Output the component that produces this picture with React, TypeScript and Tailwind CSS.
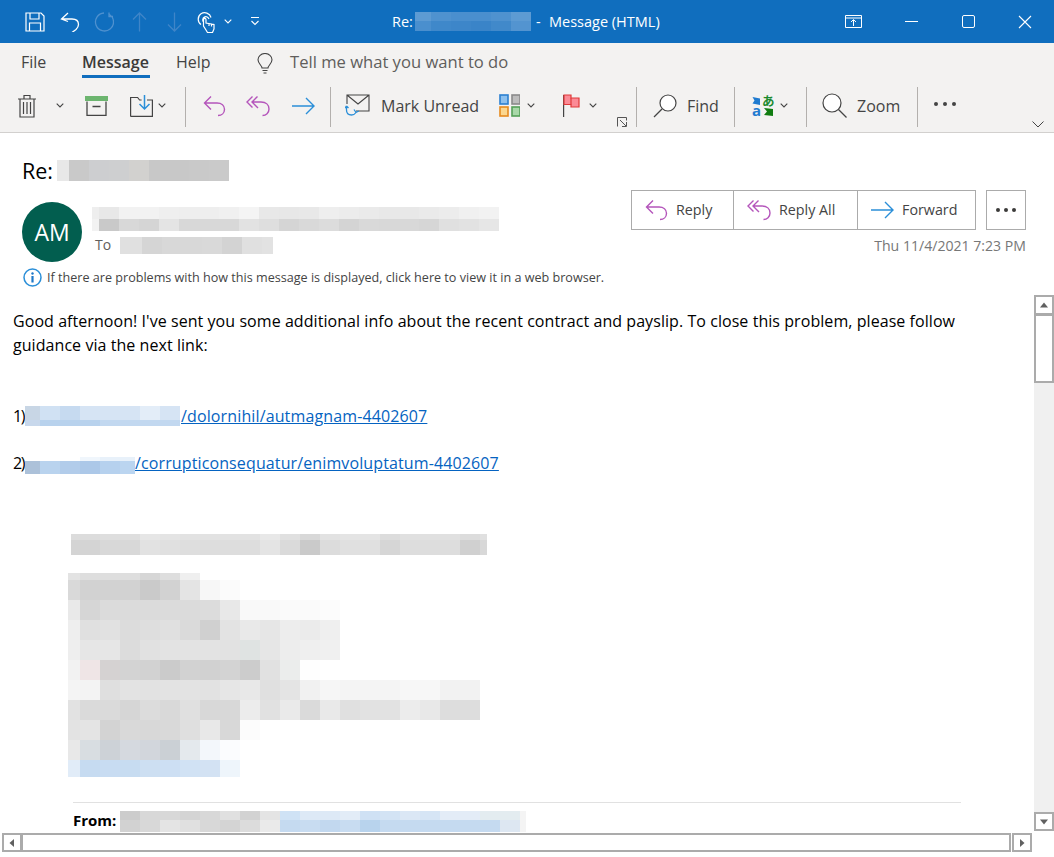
import type { ReactNode } from "react"

// pixelated (redacted) blocks: every row is a list of cell colours
function Mosaic({ rows, first, cell = 20, h }: { rows: string[][]; first: number; cell?: number; h: number[] }) {
  return (
    <div className="flex flex-col shrink-0">
      {rows.map((row, i) => (
        <div key={i} className="flex" style={{ height: h[i] }}>
          {row.map((c, j) => (
            <div key={j} className="shrink-0" style={{ background: "#" + c, width: j === 0 ? first : cell }} />
          ))}
        </div>
      ))}
    </div>
  )
}

const g = (s: string) => s.split(" ").map((v) => (v.length === 2 ? v + v + v : v))

const TITLE = [g("5d9bd3 4f92cf 4a8fce 4a8fce 4f92cf 5d9bd3"), g("4a8fce 3f88ca 3d86c9 3a84c8 4189ca 5394d0")]
const SUBJECT = [g("e8 c9 cdced0 cecfd0 d2d1cf c8 c8 c9 ca")]
const SENDER = [
  g("ee e8 f2 f2 ef ee ee f0 f4 e8 e7 e8 ee ec ea e8 e8 ea ec f0 f2"),
  g("f2 c9 d8 d5 e4 d8 d8 d8 e2 de d5 d9 dc d4 d9 d8 d8 d6 e0 e2 e6"),
]
const TO = [g("e0 d5 d8 d8 d9 d3 e0 e2")]
const LINK1 = [
  g("c8d6e5 d0e1f3 c6daf0 d6e4f4 d6e4f4 d6e4f4 e3edf8 d6e4f4"),
  g("c8d8ec b8d2ed b8d2ed b8d2ed c2d8f0 c2d8f0 c2d8f0 c2d8f0"),
]
const LINK2 = [
  g("ffffff ffffff ffffff f0f6fc e8f1fa e8f1fa"),
  g("acc1d9 b9d3ee b2ccea acc8e8 b6d1ee bbd5f0"),
]
const HEADING = [
  g("dc dc de de e6 e4 e2 e2 e2 e2 e8 e0 d8 e2 e4 e4 dc e0 e0 e0 dc e0"),
  g("d4 d4 d8 d8 e2 e0 de dd dd dd e4 da ca dc e0 e0 d6 dd dd dd d0 d8"),
]
const BLOCK = [
  g("e3 de de de d6 de ef"),
  g("d9 d2 d2 d2 ca d2 e4 f7 fb"),
  g("e9 d6 db db db db db dc e8 f9 f9 fa fa fc"),
  g("ee e0 e1 dc de e0 da d0 e3 e9 e6 ed eb ef"),
  g("ee e6 e6 dc e1 e3 e3 e3 e2 dfe3e2 e6 ed ef f0"),
  g("f2 efe5e6 d5d2d2 d3 d2 cb d2 d1 d3 cc e1 ebedec fe"),
  g("f4 f3 df e3 e2 e3 e3 e2 e6 e8 e0 e4 f1 f6 f4 f4 f4 f7 f7 f2 f2"),
  g("e2 da da d6 dc d9 e0 d8 d8 ec e1 ea da e9 e0 e2 e2 ec e8 dd dd"),
  g("e3 e4 d3 d9 d8 d9 df e8 d8 fc"),
  g("e8 d8dde1 cdd2d7 d5d9df d2d6dc cbd0d5 e4e9ed f3f7fb fbfcfe"),
  g("e1ecf8 c6dbf1 c8dcf2 c7dcf1 cddff2 cddff3 d1e2f4 d3e2f3 eef5fb"),
]
const FROM = [
  g("cc d8 d8 d4 d8 e0 d2 e4 cfe2f5 dde9f6 dde9f6 e2ecf7 cfe1f4 d3e3f4 dbe7f5 d6e5f5 e3ecf7 e3ecf7 e3ecf0 e3ecf0 f4f4f4"),
  g("d2 d8 e4 e0 d8 d4 dc ea c5daf0 c8dcf1 c2d8ef c8dcf1 b8d3ed c5daf0 c5daf0 c5daf0 c5daf0 c5daf0 c5daf0 dde7f2 f4f4f4"),
]

const Chevron = ({ className = "" }: { className?: string }) => (
  <svg width="8" height="5" viewBox="0 0 8 5" className={`shrink-0 ${className}`}>
    <path d="M.7.7 4 4 7.3.7" fill="none" stroke="#444" strokeWidth="1.1" />
  </svg>
)

const Sep = ({ className = "" }: { className?: string }) => <div className={`w-px h-10 mt-[3px] bg-[#b3b0ad] shrink-0 ${className}`} />

const ReplyIcon = () => (
  <svg width="23" height="22" viewBox="0 0 23 22" fill="none" stroke="#b455bb" strokeWidth="1.4" className="shrink-0">
    <path d="M8 1.500 1.500 8 8 14.500M1.500 8H14c4.500 0 7.500 2.500 7.500 6.300 0 3.700-2.800 6.200-6.500 6.200" />
  </svg>
)

const ReplyAllIcon = () => (
  <svg width="24" height="22" viewBox="0 0 24 22" fill="none" stroke="#b455bb" strokeWidth="1.4" className="shrink-0">
    <path d="M6.500 1.500 1 7l5.500 5.500M11.500 1.500 6 7l6 6M6 7h9c5 0 8 3 8 7 0 4-3 6.500-6.500 6.500" />
  </svg>
)

const ForwardIcon = () => (
  <svg width="23" height="18" viewBox="0 0 23 18" fill="none" stroke="#2b8fd8" strokeWidth="1.4" className="shrink-0">
    <path d="M0 9h22M14 1l8 8-8 8" />
  </svg>
)

const Dots = ({ color = "#3b3a39" }: { color?: string }) => (
  <svg width="22" height="4" viewBox="0 0 22 4" className="shrink-0">
    <circle cx="2" cy="2" r="2" fill={color} />
    <circle cx="11" cy="2" r="2" fill={color} />
    <circle cx="20" cy="2" r="2" fill={color} />
  </svg>
)

function HeaderButton({ icon, label, width }: { icon: ReactNode; label: string; width: string }) {
  return (
    <div className={`flex items-center h-full pl-[13px] gap-[8px] ${width}`}>
      {icon}
      <span className="text-[14.300px] text-[#444]">{label}</span>
    </div>
  )
}

function ScrollButton({ d, className }: { d: string; className: string }) {
  return (
    <div className={`flex items-center justify-center border-2 border-[#ababab] bg-white shrink-0 ${className}`}>
      <svg width="10" height="10" viewBox="0 0 10 10">
        <path d={d} fill="#606060" />
      </svg>
    </div>
  )
}

export default function App() {
  return (
    <div className="h-[857px] w-[1054px] overflow-hidden flex flex-col bg-white text-black font-['Open_Sans','Noto_Sans',sans-serif]">
      {/* title bar */}
      <div className="h-[43px] bg-[#106ebe] flex items-center text-white shrink-0">
        <svg width="20" height="20" viewBox="0 0 20 20" fill="none" stroke="#fff" strokeWidth="1.200" className="ml-[25px] shrink-0">
          <path d="M1 1h15l3 3v15H1zM5 1v6h9V1M4.500 19v-8h11v8" />
        </svg>
        <svg width="20" height="20" viewBox="0 0 20 20" fill="none" stroke="#fff" strokeWidth="1.300" className="ml-[15px] shrink-0">
          <path d="M8 1 1.500 7 8 9.500M1.500 7H12c4 0 6.500 2.200 6.500 5.500 0 2-1 3.500-2.500 5L10 22" />
        </svg>
        <svg width="20" height="20" viewBox="0 0 20 20" fill="none" stroke="#4f91cf" strokeWidth="1.300" className="ml-[14px] shrink-0">
          <path d="M15.500 2.500a9 9 0 1 1-5.500-1.500M15 .5v4h4" />
        </svg>
        <svg width="15" height="20" viewBox="0 0 15 20" fill="none" stroke="#3f85c8" strokeWidth="1.300" className="ml-[18px] shrink-0">
          <path d="M7.500 19.500V1M1 7.500 7.500 1 14 7.500" />
        </svg>
        <svg width="15" height="20" viewBox="0 0 15 20" fill="none" stroke="#3f85c8" strokeWidth="1.300" className="ml-[20px] shrink-0">
          <path d="M7.500.5V19M1 12.500 7.500 19 14 12.500" />
        </svg>
        <svg width="20" height="22" viewBox="0 0 20 22" fill="none" stroke="#fff" strokeWidth="1.200" className="ml-[15px] shrink-0">
          <path d="M4 13.500a6.500 6.500 0 1 1 10-7M6.500 11a3.200 3.200 0 1 1 5.500-3M9 19l-2.500-4V8.500c0-1.600 2.500-1.600 2.500 0V12l8 1.500V18l-1.500 3.500H10.500zM12 12v3M14.500 12.500v3" />
        </svg>
        <Chevron className="ml-[7px] [&_path]:stroke-white" />
        <svg width="10" height="9" viewBox="0 0 10 9" fill="none" stroke="#fff" strokeWidth="1.100" className="ml-[18px] shrink-0">
          <path d="M1 .5h8M1.500 4 5 7.500 8.500 4" />
        </svg>
        <span className="ml-[132px] text-[14.500px] w-[23px] shrink-0">Re:</span>
        <Mosaic rows={TITLE} first={16} h={[9, 10]} />
        <span className="ml-[5px] text-[14.500px] w-[13px] shrink-0">-</span>
        <span className="text-[14.500px] w-[112px] shrink-0 whitespace-nowrap">Message (HTML)</span>
        <svg width="17" height="13" viewBox="0 0 17 13" fill="none" stroke="#fff" strokeWidth="1" className="ml-[184px] shrink-0">
          <path d="M.5.500h16v12H.5zM.5 3h16M8.500 11V5M6 7l2.500-2.500L11 7" />
        </svg>
        <div className="ml-[43px] w-[13px] h-px bg-white shrink-0" />
        <div className="ml-[44px] w-[13px] h-[13px] border border-white rounded-[2px] shrink-0" />
        <svg width="14" height="14" viewBox="0 0 14 14" stroke="#fff" strokeWidth="1.100" className="ml-[43px] shrink-0">
          <path d="M1 1l12 12M13 1 1 13" />
        </svg>
      </div>

      {/* ribbon tabs */}
      <div className="h-[38px] bg-[#f3f2f1] flex items-start pl-[21px] text-[16px] text-[#444] shrink-0">
        <span className="mt-[7px] w-[61px]">File</span>
        <span className="w-[68px] h-[35px] pt-[7px] border-b-[3px] border-[#106ebe] font-semibold whitespace-nowrap text-[#3b3a39]">Message</span>
        <span className="mt-[7px] ml-[26px] w-[35px]">Help</span>
        <svg width="16" height="21" viewBox="0 0 16 21" fill="none" stroke="#444" strokeWidth="1.100" className="ml-[46px] mt-[10px] shrink-0">
          <path d="M5 15c0-2.500-4-4.500-4-8.200a7 6.300 0 0 1 14 0C15 10.500 11 12.500 11 15zM5.500 17.500h5M6.500 20h3" />
        </svg>
        <span className="mt-[7px] ml-[17px] text-[16.600px] text-[#605e5c] whitespace-nowrap">Tell me what you want to do</span>
      </div>

      {/* ribbon commands */}
      <div className="h-[52px] bg-[#f3f2f1] border-b border-[#d2d0ce] flex items-center pl-[17px] pb-[2px] text-[16px] text-[#444] shrink-0">
        <svg width="20" height="24" viewBox="0 0 20 24" fill="none" stroke="#444" strokeWidth="1.200" className="shrink-0">
          <path d="M1 5h18M7 5V1.500h6V5M3 5v18h14V5M6.500 8v12M10 8v12M13.500 8v12" />
        </svg>
        <Chevron className="ml-[19px]" />
        <svg width="23" height="20" viewBox="0 0 23 20" fill="none" className="ml-[21px] shrink-0">
          <path d="M0 0h23v5H0z" fill="#6cb56f" />
          <path d="M2 5.500v14h19v-14M7.500 10.500h8" stroke="#444" strokeWidth="1.300" />
        </svg>
        <svg width="23" height="22" viewBox="0 0 23 22" fill="none" className="ml-[22px] shrink-0">
          <path d="M.6 21.400V2.500h7l2 2.500h2M17 5h5.400v16.400H.6" stroke="#444" strokeWidth="1.200" />
          <path d="M14.500 0v14M9.500 9l5 5 5-5" stroke="#2b8fd8" strokeWidth="1.500" />
        </svg>
        <Chevron className="ml-[5px]" />
        <Sep className="ml-[19px]" />
        <div className="ml-[17px] shrink-0"><ReplyIcon /></div>
        <div className="ml-[20px] shrink-0"><ReplyAllIcon /></div>
        <div className="ml-[22px] shrink-0"><ForwardIcon /></div>
        <Sep className="ml-[15px]" />
        <svg width="25" height="23" viewBox="0 0 25 23" fill="none" className="ml-[14px] shrink-0">
          <path d="M2 10V1h22v16H11M2 1l11 9L24 1" stroke="#444" strokeWidth="1.100" />
          <path d="M1.500 12v4c0 3 2 5 5 5 2 0 3.500-1 4.500-2.500M9 15.500l2 3 2.800-1.500M1.500 12 0 14M1.500 12 3.500 14" stroke="#2b8fd8" strokeWidth="1.300" />
        </svg>
        <span className="ml-[11px] w-[99px] whitespace-nowrap shrink-0">Mark Unread</span>
        <svg width="21" height="23" viewBox="0 0 21 23" fill="none" strokeWidth="1.600" className="ml-[19px] shrink-0">
          <rect x="1" y="1" width="8" height="9" fill="#8cc0ee" stroke="#2b7fd0" />
          <rect x="13" y="1" width="8" height="9" fill="#bdbdbd" stroke="#8a8a8a" />
          <rect x="1" y="13" width="8" height="9" fill="#fbd78f" stroke="#e58a1f" />
          <rect x="13" y="13" width="8" height="9" fill="#a8d8a8" stroke="#54a058" />
        </svg>
        <Chevron className="ml-[7px]" />
        <svg width="17" height="23" viewBox="0 0 17 23" fill="none" className="ml-[28px] shrink-0">
          <path d="M.6 1v22" stroke="#444" strokeWidth="1.200" />
          <path d="M1 1h7v3h8v9H8v-2.500H1z" fill="#fb8b96" stroke="#e03a3a" strokeWidth="1.200" />
          <path d="M8 4v6.500" stroke="#e03a3a" strokeWidth="1.200" />
        </svg>
        <Chevron className="ml-[9px]" />
        <svg width="10" height="10" viewBox="0 0 10 10" fill="none" stroke="#555" strokeWidth="1" className="ml-[20px] self-end mb-[3px] shrink-0">
          <path d="M.5 9.500V.5h9v3M3 3l6 6M9.500 5v4.500H5" />
        </svg>
        <Sep className="ml-[9px]" />
        <svg width="24" height="24" viewBox="0 0 24 24" fill="none" stroke="#444" strokeWidth="1.200" className="ml-[16px] shrink-0">
          <circle cx="15" cy="9" r="8" fill="#fff" />
          <path d="M9 15 1 23" />
        </svg>
        <span className="ml-[10px] w-[31px] shrink-0">Find</span>
        <Sep className="ml-[16px]" />
        <svg width="26" height="36" viewBox="0 -6 26 36" fill="none" className="ml-[16px] -mr-[2px] shrink-0">
          <path d="M1.500 3 9 4.500V11L1.500 9.500l2-3z" fill="#1f7bd0" />
          <text x="1" y="22" fontSize="15" fontWeight="700" fill="#1f7bd0" fontFamily="'Open Sans', sans-serif">a</text>
          <text x="11" y="12" fontSize="12.500" fontWeight="700" fill="#1a8a2e" fontFamily="'Noto Sans CJK JP', sans-serif">あ</text>
          <path d="M13 14l9 1v7l-9-1 3-3.500z" fill="#107c10" />
        </svg>
        <Chevron className="ml-[5px]" />
        <Sep className="ml-[18px]" />
        <svg width="25" height="25" viewBox="0 0 25 25" fill="none" stroke="#444" strokeWidth="1.200" className="ml-[15px] shrink-0">
          <circle cx="10" cy="10" r="9" fill="#fff" />
          <path d="M16.500 16.500 24.500 24.500" />
        </svg>
        <span className="ml-[10px] w-[44px] shrink-0">Zoom</span>
        <Sep className="ml-[16px]" />
        <div className="ml-[16px] shrink-0 mb-[3px]"><Dots color="#444" /></div>
        <svg width="12" height="7" viewBox="0 0 12 7" fill="none" stroke="#444" strokeWidth="1" className="ml-[76px] self-end mb-[2px] shrink-0">
          <path d="M.5.500 6 6l5.500-5.500" />
        </svg>
      </div>

      {/* message header */}
      <div className="h-[161px] flex justify-between pr-[28px] shrink-0">
        <div className="pl-[22px] pt-[27px]">
          <div className="flex items-center h-[21px]">
            <span className="text-[21.500px] w-[35px] shrink-0 leading-none">Re:</span>
            <Mosaic rows={SUBJECT} first={12} h={[21]} />
          </div>
          <div className="flex mt-[21px]">
            <div className="w-[60px] h-[60px] rounded-full bg-[#025e4f] text-white text-[23px] flex items-center justify-center shrink-0">AM</div>
            <div className="ml-[10px] pt-[5px]">
              <Mosaic rows={SENDER} first={7} h={[12, 12]} />
              <div className="flex items-center mt-[6px] h-[17px]">
                <span className="ml-[3px] w-[25px] text-[14px] text-[#605e5c] -mt-[2px]">To</span>
                <div className="w-[153px] overflow-hidden">
                  <Mosaic rows={TO} first={22} h={[17]} />
                </div>
              </div>
            </div>
          </div>
          <div className="flex items-center mt-[6px] ml-[1px]">
            <svg width="19" height="19" viewBox="0 0 19 19" className="shrink-0">
              <circle cx="9.500" cy="9.500" r="8.500" fill="#fff" stroke="#2b8fd8" strokeWidth="1.500" />
              <circle cx="9.500" cy="5.500" r="1.200" fill="#1e78c8" />
              <path d="M9.500 8v6.500" stroke="#1e78c8" strokeWidth="2.200" />
            </svg>
            <span className="ml-[5px] mt-[1px] text-[12.600px] text-[#444] whitespace-nowrap">If there are problems with how this message is displayed, click here to view it in a web browser.</span>
          </div>
        </div>
        <div className="pt-[57px] flex flex-col items-end">
          <div className="flex">
            <div className="flex h-[40px] border border-[#ababab] divide-x divide-[#ababab]">
              <HeaderButton icon={<ReplyIcon />} label="Reply" width="w-[102px]" />
              <HeaderButton icon={<ReplyAllIcon />} label="Reply All" width="w-[124px]" />
              <HeaderButton icon={<ForwardIcon />} label="Forward" width="w-[117px]" />
            </div>
            <div className="ml-[10px] w-[40px] h-[40px] border border-[#ababab] flex items-center justify-center">
              <svg width="20" height="4" viewBox="0 0 20 4">
                <circle cx="2" cy="2" r="2" fill="#3b3a39" />
                <circle cx="10" cy="2" r="2" fill="#3b3a39" />
                <circle cx="18" cy="2" r="2" fill="#3b3a39" />
              </svg>
            </div>
          </div>
          <span className="mt-[5px] text-[14.100px] text-[#777] whitespace-nowrap">Thu 11/4/2021 7:23 PM</span>
        </div>
      </div>

      {/* message body */}
      <div className="flex h-[539px] shrink-0">
        <div className="w-[1034px] shrink-0 overflow-hidden pl-[14px] pt-[15px] text-[16px] leading-[24px]">
          <p className="w-[1000px] -ml-px tracking-[0.06px]">Good afternoon! I've sent you some additional info about the recent contract and payslip. To close this problem, please follow<br />guidance via the next link:</p>
          <div className="flex items-center mt-[47px] h-[24px]">
            <span className="w-[12px] -ml-px shrink-0 tracking-[-1.500px]">1)</span>
            <Mosaic rows={LINK1} first={15} h={[14, 6]} />
            <span className="ml-[1px] text-[#0563c1] underline whitespace-nowrap tracking-[0.13px]">/dolornihil/autmagnam-4402607</span>
          </div>
          <div className="flex items-center mt-[23px] h-[24px]">
            <span className="w-[12px] -ml-px shrink-0 tracking-[-1.500px]">2)</span>
            <div className="w-[110px] overflow-hidden self-start mt-[6px] shrink-0">
              <Mosaic rows={LINK2} first={15} h={[4, 13]} />
            </div>
            <span className="text-[#0563c1] underline whitespace-nowrap tracking-[0.12px]">/corrupticonsequatur/enimvoluptatum-4402607</span>
          </div>
          <div className="ml-[57px] mt-[59px] w-[416px] overflow-hidden"><Mosaic rows={HEADING} first={9} h={[6, 15]} /></div>
          <div className="ml-[54px] mt-[18px]"><Mosaic rows={BLOCK} first={12} h={[7, 20, 20, 20, 20, 20, 20, 20, 20, 20, 17]} /></div>
          <div className="ml-[59px] mt-[25px] w-[888px] h-px bg-[#e1e1e1]" />
          <div className="flex ml-[59px] mt-[8px]">
            <span className="w-[47px] text-[15px] leading-[19px] font-bold shrink-0">From:</span>
            <div className="w-[406px] overflow-hidden">
              <Mosaic rows={FROM} first={20} h={[9, 12]} />
            </div>
          </div>
        </div>
        <div className="w-[20px] shrink-0 flex flex-col mt-px">
          <ScrollButton d="M5 2.500 9 7.500H1z" className="h-[20px]" />
          <div className="h-[69px] border-2 border-[#ababab] -mt-px bg-white" />
          <div className="flex-1 bg-[#f0f0f0]" />
          <ScrollButton d="M5 7.500 1 2.500h8z" className="h-[19px] mb-[2px]" />
        </div>
      </div>

      {/* horizontal scrollbar */}
      <div className="flex h-[19px] pl-[2px] shrink-0">
        <ScrollButton d="M2.500 5 7 1v8z" className="w-[20px]" />
        <div className="w-[990px] border-2 border-[#ababab] -ml-px bg-white" />
        <ScrollButton d="M7.500 5 3 1v8z" className="w-[20px] ml-px" />
      </div>
    </div>
  )
}
